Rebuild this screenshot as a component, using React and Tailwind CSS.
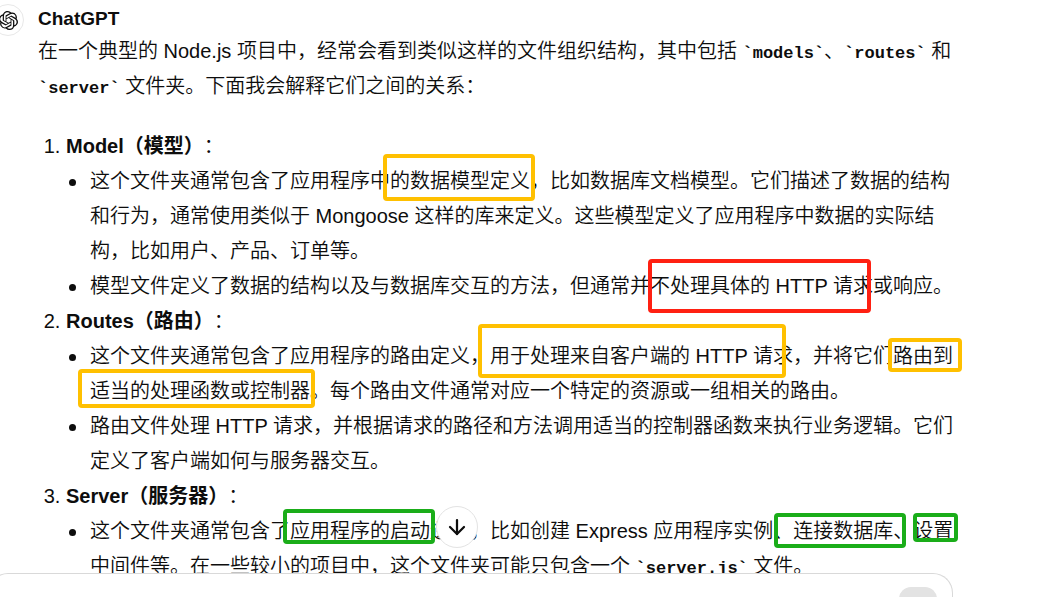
import { ArrowDown } from "lucide-react";
import { SiOpenai } from "react-icons/si";

function Code({ children }) {
  return (
    <code className="font-['Liberation_Mono',monospace] text-[17px] leading-none font-bold">
      `{children}`
    </code>
  );
}

function Section({ title, children }) {
  return (
    <li>
      <p>
        <strong className="font-bold">{title}</strong>：
      </p>
      <ul className="list-none pl-6">{children}</ul>
    </li>
  );
}

function Point({ children }) {
  return (
    <li className="before:mr-[14px] before:-ml-[21px] before:inline-block before:size-[7px] before:rounded-full before:bg-[#0d0d0d] before:align-middle before:content-['']">
      {children}
    </li>
  );
}

// Hand-drawn boxes laid over the answer text.
const marks = [
  "left-[383px] top-[154px] h-[47px] w-[152px] border-[#ffc000]",
  "left-[648px] top-[259px] h-[54px] w-[223px] border-[#ff2012]",
  "left-[478px] top-[324px] h-[54px] w-[308px] border-[#ffc000]",
  "left-[888px] top-[338px] h-[34px] w-[74px] border-[#ffc000]",
  "left-[78px] top-[369px] h-[39px] w-[237px] border-[#ffc000]",
  "left-[283px] top-[509px] h-[35px] w-[152px] border-[#1aad19]",
  "left-[774px] top-[513px] h-[35px] w-[132px] border-[#1aad19]",
  "left-[913px] top-[513px] h-[29px] w-[45px] border-[#1aad19]",
];

export default function App() {
  return (
    <div className="relative flex h-screen flex-col overflow-hidden bg-white font-['Liberation_Sans','Noto_Sans_CJK_SC',sans-serif] text-[20px] leading-[35px] font-[350] text-[#0d0d0d] [text-spacing-trim:space-all]">
      <main className="min-h-0 flex-1 overflow-hidden">
        <article className="-ml-2 flex max-w-[972px] gap-[14px] pt-1" lang="zh-CN">
          <div className="flex size-8 shrink-0 items-center justify-center rounded-full border border-[#e8e8e8]">
            <SiOpenai className="size-[19px]" aria-hidden="true" />
          </div>
          <div className="min-w-0 flex-1">
            <h2 className="text-[19px] leading-[30px] font-bold">ChatGPT</h2>
            <p>
              在一个典型的 Node.js 项目中，经常会看到类似这样的文件组织结构，其中包括 <Code>models</Code>、<Code>routes</Code> 和 <Code>server</Code> 文件夹。下面我会解释它们之间的关系：
            </p>
            <ol className="mt-[25px] list-decimal pl-7">
              <Section title="Model（模型）">
                <Point>
                  这个文件夹通常包含了应用程序中的数据模型定义，比如数据库文档模型。它们描述了数据的结构
                  <br />
                  和行为，通常使用类似于 Mongoose 这样的库来定义。这些模型定义了应用程序中数据的实际结
                  <br />
                  构，比如用户、产品、订单等。
                </Point>
                <Point>模型文件定义了数据的结构以及与数据库交互的方法，但通常并不处理具体的 HTTP 请求或响应。</Point>
              </Section>
              <Section title="Routes（路由）">
                <Point>
                  这个文件夹通常包含了应用程序的路由定义，用于处理来自客户端的 HTTP 请求，并将它们路由到适当的处理函数或控制器。每个路由文件通常对应一个特定的资源或一组相关的路由。
                </Point>
                <Point>路由文件处理 HTTP 请求，并根据请求的路径和方法调用适当的控制器函数来执行业务逻辑。它们定义了客户端如何与服务器交互。</Point>
              </Section>
              <Section title="Server（服务器）">
                <Point>
                  这个文件夹通常包含了应用程序的启动逻辑，比如创建 Express 应用程序实例、连接数据库、设置中间件等。在一些较小的项目中，这个文件夹可能只包含一个 <Code>server.js</Code> 文件。
                </Point>
              </Section>
            </ol>
          </div>
        </article>
      </main>

      <footer className="-ml-3 flex h-6 max-w-[965px] shrink-0 justify-end overflow-hidden rounded-t-[20px] border border-b-0 border-[#d9d9d9] bg-white pt-[13px] pr-[15px]">
        <button type="button" aria-label="发送" className="h-[38px] w-[38px] rounded-xl bg-[#e3e3e3]" />
      </footer>

      {marks.map((place) => (
        <div key={place} className={`pointer-events-none absolute rounded-[4px] border-4 ${place}`} />
      ))}

      <button
        type="button"
        aria-label="滚动到底部"
        className="absolute top-[506px] left-[436px] flex size-[42px] items-center justify-center rounded-full border border-[#e3e3e3] bg-white"
      >
        <ArrowDown className="size-6" strokeWidth={2.25} aria-hidden="true" />
      </button>
    </div>
  );
}
